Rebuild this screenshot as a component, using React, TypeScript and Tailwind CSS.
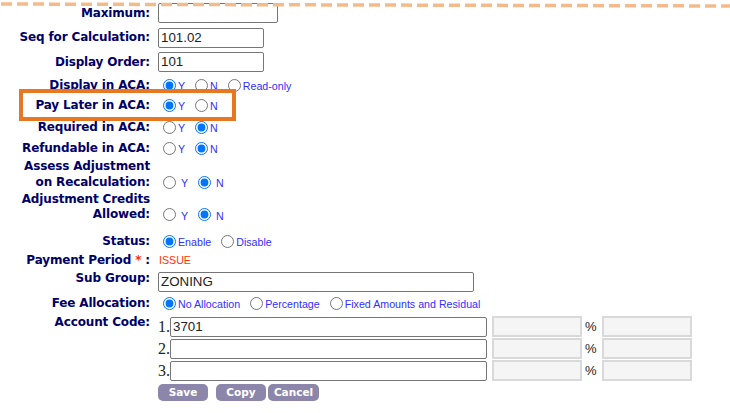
import React from 'react';

const labelCls =
  "w-[150px] shrink-0 text-right font-['DejaVu_Sans',sans-serif] font-bold text-[12px] tracking-[-0.15px] text-[#000066]";

function Radio({ name, label, checked, wide }: { name: string; label: string; checked?: boolean; wide?: boolean }) {
  return (
    <label className="flex items-center">
      <input type="radio" name={name} defaultChecked={checked} className="m-0 ml-[5px] h-[13px] w-[13px]" />
      <span
        className={`${wide ? 'ml-[5px]' : 'ml-[2px]'} pt-[2px] font-['Liberation_Sans',Arial,sans-serif] text-[10.67px] leading-[12px] text-[#3030ff]`}
      >
        {label}
      </span>
    </label>
  );
}

function Row({
  label,
  className,
  labelClassName = 'leading-[15px]',
  children,
}: {
  label: React.ReactNode;
  className: string;
  labelClassName?: string;
  children?: React.ReactNode;
}) {
  return (
    <div className={`flex ${className}`}>
      <div className={`${labelCls} ${labelClassName}`}>{label}</div>
      <div className="ml-[8px] flex items-center gap-[5px]">{children}</div>
    </div>
  );
}

function TextBox({ value, width }: { value?: string; width: string }) {
  return (
    <div
      className={`${width} flex h-[20px] items-center rounded-[2px] border border-[#767676] bg-white px-[2px] font-['Liberation_Sans',Arial,sans-serif] text-[13.33px] text-[#222]`}
    >
      {value}
    </div>
  );
}

function AccountLine({ n, value }: { n: number; value?: string }) {
  return (
    <div className="flex h-[21px] items-center">
      <span className="w-[12px] font-['Liberation_Serif',serif] text-[16px] leading-[16px] text-[#222]">{n}.</span>
      <TextBox value={value} width="w-[317px]" />
      <div className="ml-[5px] h-[21px] w-[90px] border-2 border-[#d9d9d9] bg-[#f5f5f5]" />
      <span className="ml-[3px] w-[17px] font-['Liberation_Sans',Arial,sans-serif] text-[13px] text-[#222]">%</span>
      <div className="h-[21px] w-[90px] border-2 border-[#d9d9d9] bg-[#f5f5f5]" />
    </div>
  );
}

const btn =
  "flex h-[17px] w-[50px] items-center justify-center rounded-[5px] bg-[#8c86ab] font-['DejaVu_Sans',sans-serif] text-[10.5px] font-bold text-white";

export default function App() {
  return (
    <div className="relative h-[413px] w-[730px] overflow-hidden bg-white">
      <div className="flex flex-col pt-[3px]">
        <Row label="Maximum:" className="h-[20px] items-center">
          <TextBox width="w-[120px]" />
        </Row>
        <Row label="Seq for Calculation:" className="mt-[4px] h-[21px] items-center">
          <TextBox value="101.02" width="w-[106px]" />
        </Row>
        <Row label="Display Order:" className="mt-[4px] h-[20px] items-center">
          <TextBox value="101" width="w-[106px]" />
        </Row>
        <Row label="Display in ACA:" className="mt-[4px] h-[18px] items-center">
          <Radio name="disp" label="Y" checked />
          <Radio name="disp" label="N" />
          <Radio name="disp" label="Read-only" />
        </Row>
        <Row label="Pay Later in ACA:" className="mt-[2px] h-[18px] items-center">
          <Radio name="pay" label="Y" checked />
          <Radio name="pay" label="N" />
        </Row>
        <Row label="Required in ACA:" className="mt-[4px] h-[18px] items-center">
          <Radio name="req" label="Y" />
          <Radio name="req" label="N" checked />
        </Row>
        <Row label="Refundable in ACA:" className="mt-[3px] h-[18px] items-center">
          <Radio name="ref" label="Y" />
          <Radio name="ref" label="N" checked />
        </Row>
        <Row
          label={
            <>
              Assess Adjustment
              <br />
              on Recalculation:
            </>
          }
          labelClassName="leading-[15.5px]"
          className="mt-[2px] h-[31px] items-end"
        >
          <div className="flex h-[15.5px] items-center gap-[5px]">
            <Radio name="assess" label="Y" wide />
            <Radio name="assess" label="N" checked wide />
          </div>
        </Row>
        <Row
          label={
            <>
              Adjustment Credits
              <br />
              Allowed:
            </>
          }
          className="mt-[2px] h-[30px] items-end"
        >
          <div className="flex h-[15px] items-center gap-[5px]">
            <Radio name="credits" label="Y" wide />
            <Radio name="credits" label="N" checked wide />
          </div>
        </Row>
        <Row label="Status:" className="mt-[10px] h-[18px] items-center">
          <Radio name="status" label="Enable" checked />
          <Radio name="status" label="Disable" />
        </Row>
        <Row
          label={
            <>
              Payment Period <span className="text-[#ff3300]">*</span> :
            </>
          }
          className="mt-[1px] h-[18px] items-center"
        >
          <span className="ml-[1px] font-['Liberation_Sans',Arial,sans-serif] text-[10.67px] text-[#ff3300]">ISSUE</span>
        </Row>
        <Row label="Sub Group:" labelClassName="leading-[13px]" className="mt-[3px] h-[20px] items-start">
          <TextBox value="ZONING" width="w-[316px]" />
        </Row>
        <Row label="Fee Allocation:" className="mt-[2px] h-[18px] items-center">
          <Radio name="fee" label="No Allocation" checked />
          <Radio name="fee" label="Percentage" />
          <Radio name="fee" label="Fixed Amounts and Residual" />
        </Row>
        <div className="mt-[4px] flex items-start">
          <div className={`${labelCls} leading-[13px]`}>Account Code:</div>
          <div className="ml-[8px] flex flex-col gap-[1px]">
            <AccountLine n={1} value="3701" />
            <AccountLine n={2} />
            <AccountLine n={3} />
          </div>
        </div>
        <div className="ml-[158px] mt-[3px] flex">
          <button className={btn}>Save</button>
          <button className={`${btn} ml-[8px]`}>Copy</button>
          <button className={`${btn} ml-[2px] w-[51px]`}>Cancel</button>
        </div>
      </div>

      {/* annotation overlays */}
      <svg className="absolute left-0 top-0" width="730" height="12">
        <line x1="1" y1="4" x2="730" y2="6" stroke="#f4bb8a" strokeWidth="3.5" strokeDasharray="11 5" />
      </svg>
      <div className="absolute left-[19px] top-[89px] h-[32px] w-[217px] border-4 border-[#e87722]" />
    </div>
  );
}
